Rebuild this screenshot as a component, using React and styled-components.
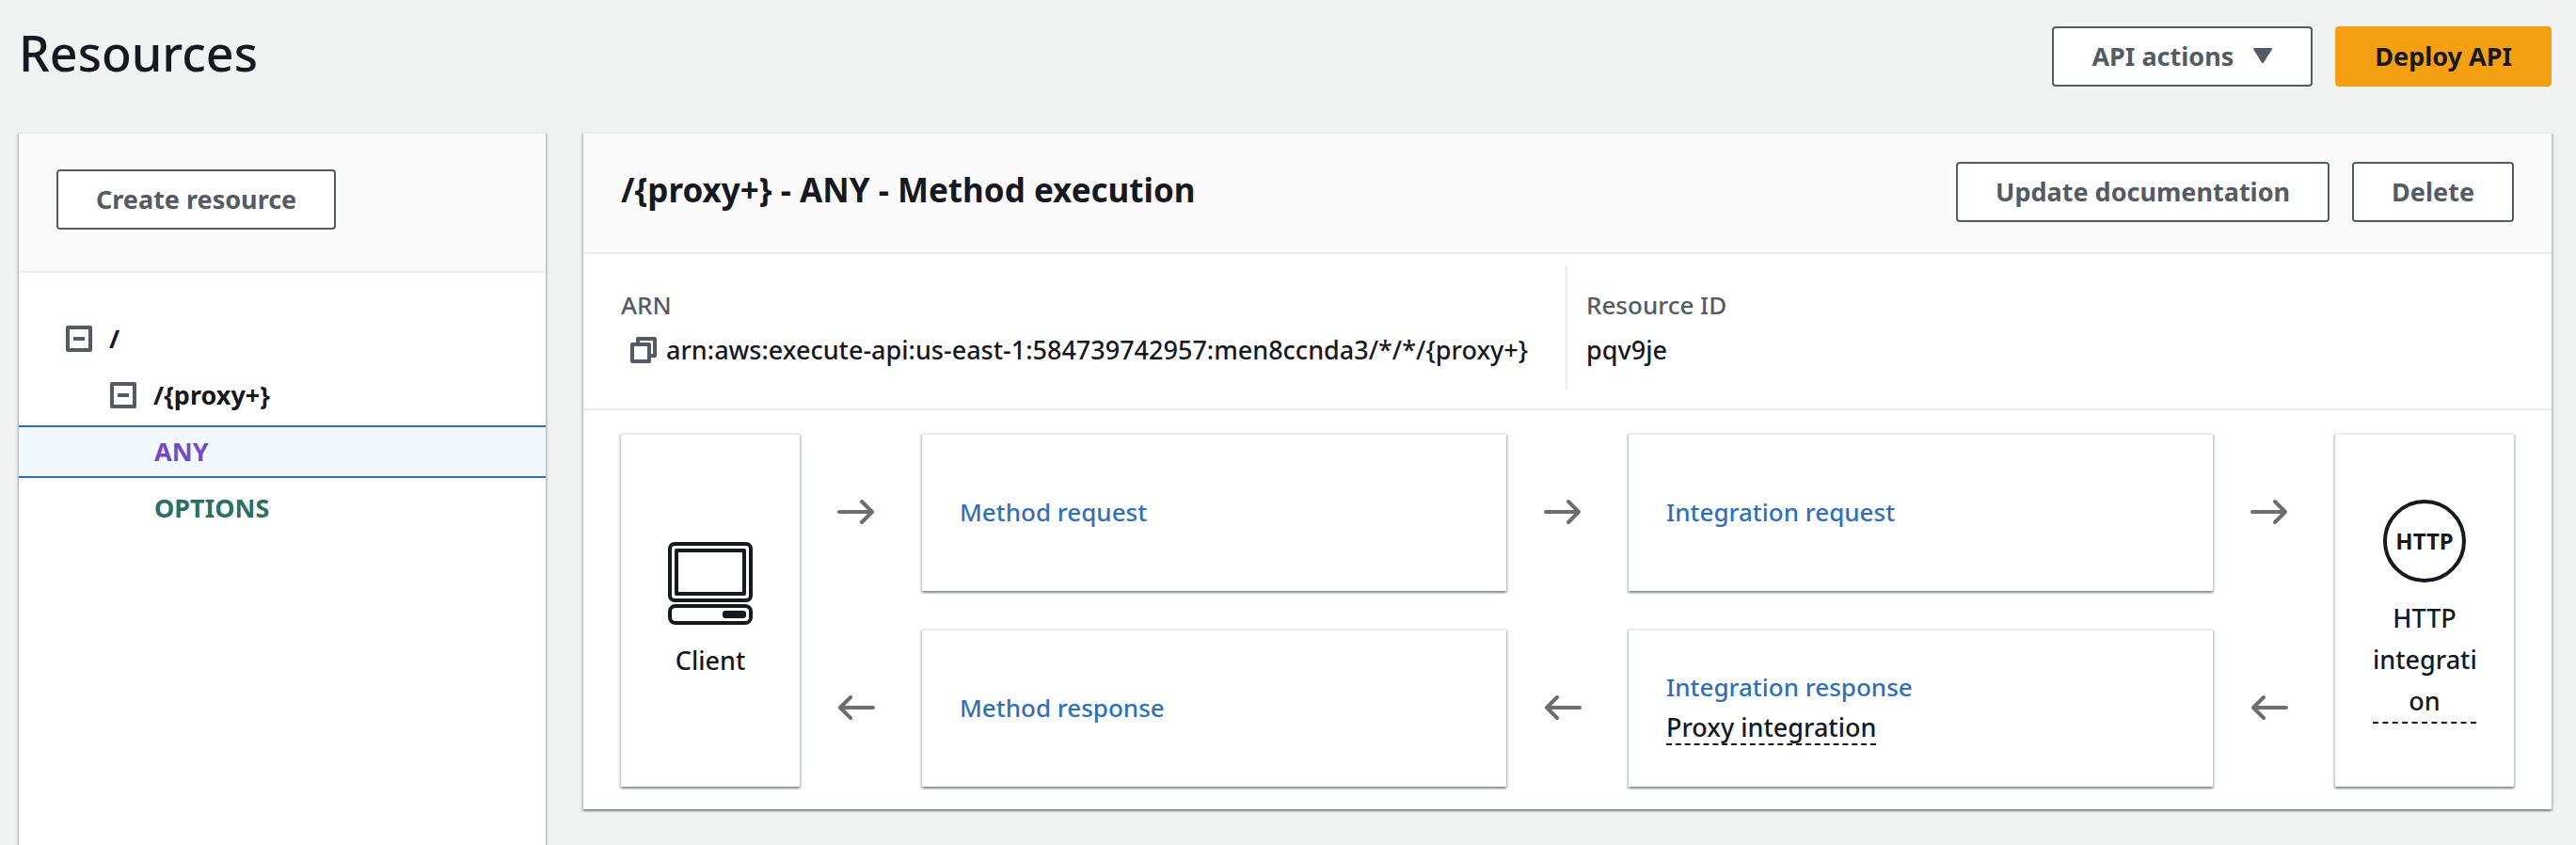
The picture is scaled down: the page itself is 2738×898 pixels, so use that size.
import React from "react";
import styled, { createGlobalStyle } from "styled-components";

const GlobalStyle = createGlobalStyle`
  * { box-sizing: border-box; }
  body {
    margin: 0;
    background: #f1f3f3;
    color: #16191f;
    font: 500 27px/44px "Noto Sans", "Open Sans", sans-serif;
  }
`;

const Page = styled.div`
  min-height: 100vh;
  display: flex;
  flex-direction: column;
  gap: 48px;
  padding: 28px 26px 0 20px;
`;

const PageHeader = styled.header`
  display: flex;
  justify-content: space-between;
  align-items: flex-start;
`;

const PageTitle = styled.h1`
  margin: 0;
  font-size: 52px;
  line-height: 56px;
  font-weight: 500;
`;

const Actions = styled.div`
  display: flex;
  gap: 24px;
`;

const Button = styled.button`
  height: 64px;
  display: inline-flex;
  align-items: center;
  gap: 20px;
  padding: 0 40px;
  border: 2px solid ${(p) => (p.$primary ? "#f59f12" : "#545b64")};
  border-radius: 4px;
  background: ${(p) => (p.$primary ? "#f59f12" : "#ffffff")};
  color: ${(p) => (p.$primary ? "#16191f" : "#545b64")};
  font: inherit;
  font-weight: 700;
  white-space: nowrap;
  cursor: pointer;
`;

const Columns = styled.main`
  flex: 1;
  display: grid;
  grid-template-columns: 560px minmax(0, 1fr);
  gap: 40px;
`;

const Panel = styled.section`
  align-self: ${(p) => (p.$fill ? "stretch" : "start")};
  border-top: 2px solid #eaeded;
  background: #ffffff;
  box-shadow:
    0 2px 2px rgba(0, 28, 36, 0.3),
    2px 2px 2px rgba(0, 28, 36, 0.15),
    -2px 2px 2px rgba(0, 28, 36, 0.15);
`;

const PanelHeader = styled.div`
  display: flex;
  justify-content: space-between;
  align-items: flex-start;
  padding: ${(p) => (p.$tall ? "38px 40px 44px" : "30px 40px 32px")};
  border-bottom: 2px solid #eaeded;
  background: #fafafa;
`;

const PanelTitle = styled.h2`
  margin: 0;
  font-size: 35px;
  line-height: 60px;
  font-weight: 700;
`;

const Tree = styled.ul`
  display: flex;
  flex-direction: column;
  gap: 4px;
  margin: 0;
  padding: 42px 0 0;
  list-style: none;
`;

const TreeRow = styled.li`
  height: 56px;
  display: flex;
  align-items: center;
  gap: 18px;
  padding-left: ${(p) => 50 + p.$level * 47}px;
  border: 0 solid #2e71ba;
  border-width: ${(p) => (p.$selected ? "2px 0" : "0")};
  background: ${(p) => (p.$selected ? "#f1f8fe" : "transparent")};
`;

const TreeToggle = styled.button`
  display: flex;
  padding: 0;
  border: 0;
  background: none;
  cursor: pointer;
`;

const TreeLink = styled.a`
  color: ${(p) => p.$color || "#16191f"};
  font-weight: 700;
  text-decoration: none;
`;

const Details = styled.dl`
  display: grid;
  grid-template-columns: 1fr 1fr;
  margin: 0;
  padding: 12px 44px 20px 40px;
  border-bottom: 2px solid #eaeded;
`;

const Detail = styled.div`
  display: flex;
  flex-direction: column;
  gap: 4px;
  padding: 20px 0;

  & + & {
    padding-left: 20px;
    border-left: 2px solid #eaeded;
  }
`;

const DetailLabel = styled.dt`
  color: #545b64;
  font-size: 26px;
`;

const DetailValue = styled.dd`
  display: flex;
  align-items: center;
  gap: 10px;
  margin: 0;
`;

const CopyButton = styled.button`
  display: flex;
  margin-left: 10px;
  padding: 0;
  border: 0;
  background: none;
  cursor: pointer;
`;

const Flow = styled.div`
  display: grid;
  grid-template-columns: 190px 130px minmax(0, 1fr) 130px minmax(0, 1fr) 130px 190px;
  grid-template-rows: repeat(2, minmax(168px, auto));
  row-gap: 40px;
  padding: 24px 40px;
`;

const Card = styled.div`
  display: flex;
  flex-direction: column;
  justify-content: center;
  align-items: flex-start;
  padding: 0 40px 2px;
  border-top: 2px solid #eaeded;
  background: #ffffff;
  box-shadow:
    0 2px 2px rgba(0, 28, 36, 0.3),
    2px 2px 2px rgba(0, 28, 36, 0.15),
    -2px 2px 2px rgba(0, 28, 36, 0.15);
`;

const EndpointCard = styled(Card)`
  grid-row: 1 / 3;
  grid-column: ${(p) => p.$column};
  align-items: center;
  gap: 12px;
  text-align: center;
`;

const ArrowCell = styled.div`
  display: flex;
  align-items: center;
  padding-left: 40px;
`;

const StepLink = styled.a`
  color: #2e71ba;
  font-size: 26px;
  text-decoration: none;
`;

const Hint = styled.span`
  line-height: 34px;
  margin: 4px 0;
  border-bottom: 2px dashed #16191f;
`;

const EndpointHint = styled.span`
  width: 110px;
  border-bottom: 2px dashed #16191f;
`;

const IconBox = styled.div`
  width: 96px;
  height: 96px;
  display: flex;
  align-items: center;
  justify-content: center;
`;

const HttpBadge = styled.div`
  width: 88px;
  height: 88px;
  display: flex;
  align-items: center;
  justify-content: center;
  border: 4px solid #16191f;
  border-radius: 50%;
  font-size: 24px;
  font-weight: 700;
`;

const CaretIcon = () => (
  <svg width="22" height="18" viewBox="0 0 22 18" aria-hidden="true">
    <path d="M2 0h18q1.600 0 .8 1.500L12 15.500q-1 1.500-2 0L1.200 1.500Q.4 0 2 0z" fill="#545b64" />
  </svg>
);

const CollapseIcon = () => (
  <svg width="28" height="28" viewBox="0 0 28 28" fill="none" stroke="#545b64" strokeWidth="4" aria-hidden="true">
    <rect x="2" y="2" width="24" height="24" strokeLinejoin="round" />
    <path d="M8 14h12" />
  </svg>
);

const CopyIcon = () => (
  <svg width="28" height="28" viewBox="0 0 28 28" fill="none" stroke="#545b64" strokeWidth="4" strokeLinejoin="round" aria-hidden="true">
    <rect x="2" y="8" width="18" height="18" />
    <path d="M8 8V2h18v18h-6" />
  </svg>
);

const ArrowIcon = ({ back }) => (
  <svg width="40" height="28" viewBox="0 0 40 28" fill="none" stroke="#6c6d70" strokeWidth="4" strokeLinecap="round" strokeLinejoin="round" aria-hidden="true">
    {back ? <path d="M38 14H3M14 3L3 14l11 11" /> : <path d="M2 14h35M26 3l11 11-11 11" />}
  </svg>
);

const ComputerIcon = () => (
  <svg width="92" height="90" viewBox="0 0 92 90" fill="none" stroke="#16191f" strokeWidth="4" aria-hidden="true">
    <rect x="3" y="3" width="86" height="60" rx="5" />
    <rect x="10" y="10" width="72" height="46" strokeLinejoin="round" />
    <rect x="3" y="69" width="86" height="18" rx="6" />
    <rect x="59" y="74" width="25" height="8" rx="3" fill="#16191f" stroke="none" />
  </svg>
);

export default function App() {
  return (
    <>
      <GlobalStyle />
      <Page>
        <PageHeader>
          <PageTitle>Resources</PageTitle>
          <Actions>
            <Button type="button" aria-haspopup="menu">
              API actions
              <CaretIcon />
            </Button>
            <Button type="button" $primary>Deploy API</Button>
          </Actions>
        </PageHeader>

        <Columns>
          <Panel $fill>
            <PanelHeader $tall>
              <Button type="button">Create resource</Button>
            </PanelHeader>
            <Tree>
              <TreeRow $level={0}>
                <TreeToggle type="button" aria-label="Collapse /"><CollapseIcon /></TreeToggle>
                <TreeLink href="#root-resource">/</TreeLink>
              </TreeRow>
              <TreeRow $level={1}>
                <TreeToggle type="button" aria-label="Collapse /{proxy+}"><CollapseIcon /></TreeToggle>
                <TreeLink href="#proxy">{"/{proxy+}"}</TreeLink>
              </TreeRow>
              <TreeRow $level={2} $selected>
                <TreeLink href="#any" $color="#734bc3">ANY</TreeLink>
              </TreeRow>
              <TreeRow $level={2}>
                <TreeLink href="#options" $color="#2b6f65">OPTIONS</TreeLink>
              </TreeRow>
            </Tree>
          </Panel>

          <Panel>
            <PanelHeader>
              <PanelTitle>{"/{proxy+} - ANY - Method execution"}</PanelTitle>
              <Actions>
                <Button type="button">Update documentation</Button>
                <Button type="button">Delete</Button>
              </Actions>
            </PanelHeader>

            <Details>
              <Detail>
                <DetailLabel>ARN</DetailLabel>
                <DetailValue>
                  <CopyButton type="button" aria-label="Copy ARN"><CopyIcon /></CopyButton>
                  {"arn:aws:execute-api:us-east-1:584739742957:men8ccnda3/*/*/{proxy+}"}
                </DetailValue>
              </Detail>
              <Detail>
                <DetailLabel>Resource ID</DetailLabel>
                <DetailValue>pqv9je</DetailValue>
              </Detail>
            </Details>

            <Flow>
              <EndpointCard $column={1}>
                <IconBox><ComputerIcon /></IconBox>
                Client
              </EndpointCard>
              <ArrowCell><ArrowIcon /></ArrowCell>
              <Card><StepLink href="#method-request">Method request</StepLink></Card>
              <ArrowCell><ArrowIcon /></ArrowCell>
              <Card><StepLink href="#integration-request">Integration request</StepLink></Card>
              <ArrowCell><ArrowIcon /></ArrowCell>
              <EndpointCard $column={7}>
                <IconBox><HttpBadge>HTTP</HttpBadge></IconBox>
                <EndpointHint>HTTP integrati<wbr />on</EndpointHint>
              </EndpointCard>
              <ArrowCell><ArrowIcon back /></ArrowCell>
              <Card><StepLink href="#method-response">Method response</StepLink></Card>
              <ArrowCell><ArrowIcon back /></ArrowCell>
              <Card>
                <StepLink href="#integration-response">Integration response</StepLink>
                <Hint>Proxy integration</Hint>
              </Card>
              <ArrowCell><ArrowIcon back /></ArrowCell>
            </Flow>
          </Panel>
        </Columns>
      </Page>
    </>
  );
}
